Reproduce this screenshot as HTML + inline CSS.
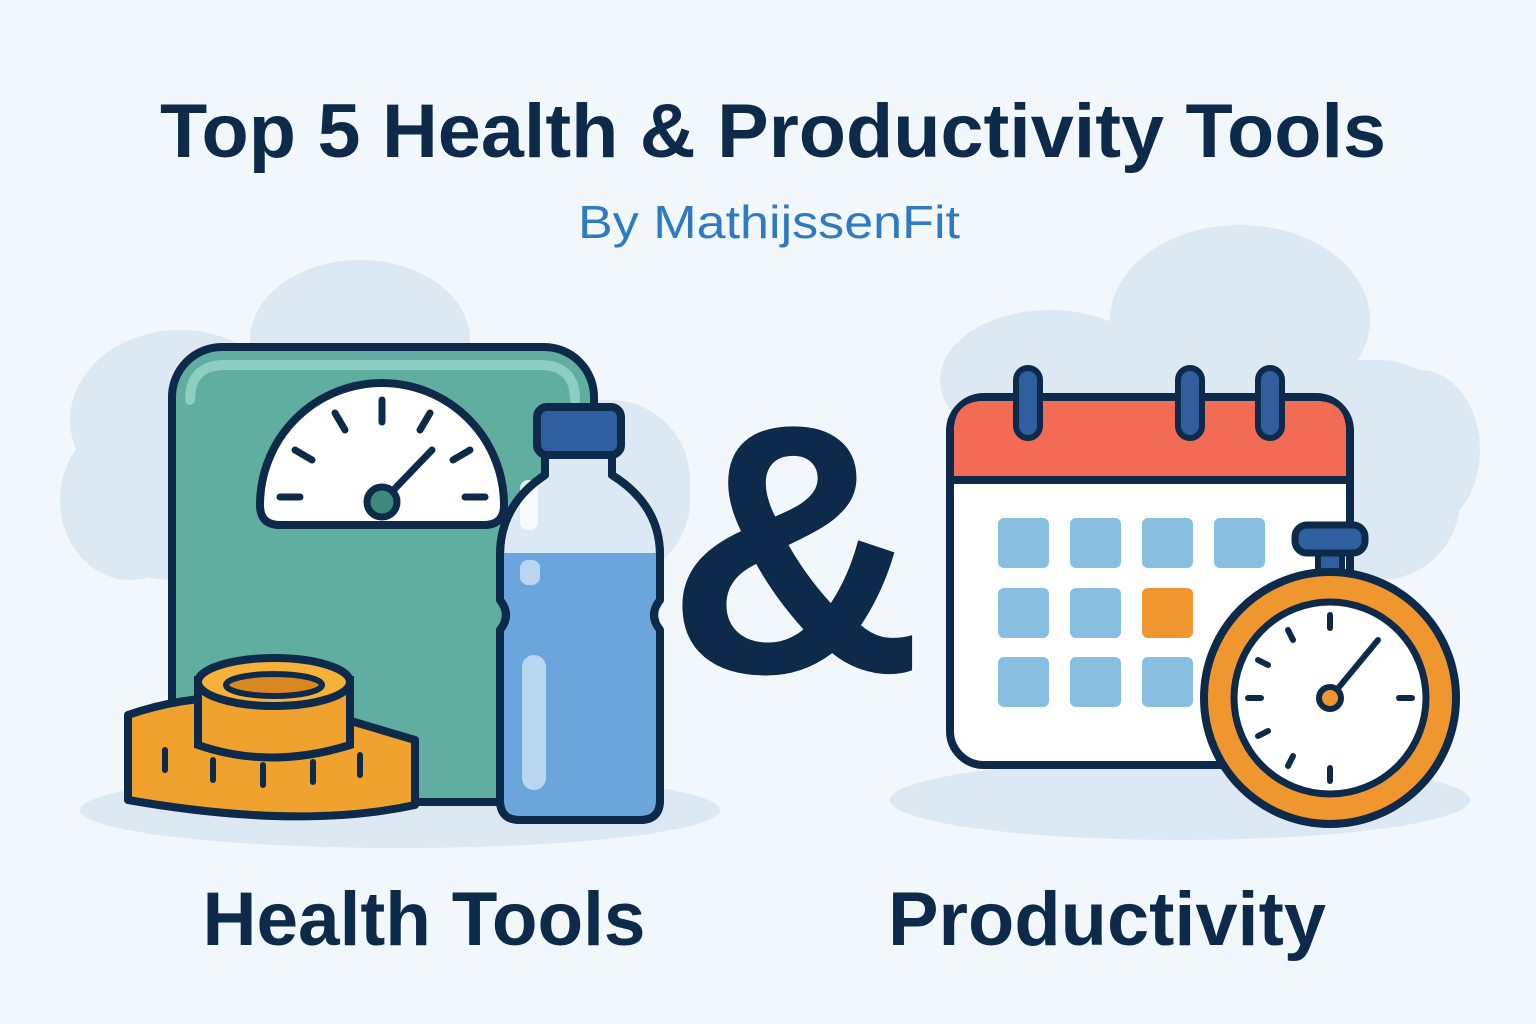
<!DOCTYPE html>
<html><head><meta charset="utf-8"><style>
html,body{margin:0;padding:0;background:#f1f7fb;}
svg{display:block}
text{font-family:"Liberation Sans",sans-serif;font-weight:bold}
</style></head><body>
<svg width="1536" height="1024" viewBox="0 0 1536 1024" xmlns="http://www.w3.org/2000/svg">
<rect width="1536" height="1024" fill="#f1f7fb"/>
<g fill="#dde9f2">
<ellipse cx="360" cy="340" rx="110" ry="80"/>
<ellipse cx="180" cy="420" rx="110" ry="90"/>
<ellipse cx="130" cy="500" rx="70" ry="80"/>
<rect x="90" y="400" width="600" height="180" rx="80"/>
<ellipse cx="1240" cy="320" rx="130" ry="95"/>
<ellipse cx="1050" cy="380" rx="110" ry="70"/>
<ellipse cx="1420" cy="450" rx="60" ry="80"/>
<rect x="960" y="360" width="500" height="220" rx="80"/>
<ellipse cx="400" cy="810" rx="320" ry="38"/>
<ellipse cx="1180" cy="800" rx="290" ry="40"/>
</g>
<text x="773" y="157" font-size="76" fill="#0d2a4a" text-anchor="middle" textLength="1226" lengthAdjust="spacingAndGlyphs">Top 5 Health &amp; Productivity Tools</text>
<text x="769" y="238" font-size="46" fill="#2f7bbf" text-anchor="middle" style="font-weight:normal" textLength="382" lengthAdjust="spacingAndGlyphs">By MathijssenFit</text>
<rect x="172" y="347" width="422" height="455" rx="50" fill="#5fae9f" stroke="#0d2a4a" stroke-width="8"/>
<path d="M190 400 Q190 365 225 365 L540 365 Q575 365 575 400" fill="none" stroke="#8ccfc0" stroke-width="10" stroke-linecap="round"/>
<path d="M260 505 A122 122 0 0 1 504 505 Q504 525 484 525 L280 525 Q260 525 260 505Z" fill="#fff" stroke="#0d2a4a" stroke-width="8"/>
<g stroke="#0d2a4a" stroke-width="7" stroke-linecap="round">
<line x1="280" y1="497" x2="300" y2="497"/><line x1="465" y1="497" x2="485" y2="497"/>
<line x1="295" y1="450" x2="312" y2="460"/><line x1="470" y1="450" x2="453" y2="460"/>
<line x1="335" y1="413" x2="345" y2="430"/><line x1="430" y1="413" x2="420" y2="430"/>
<line x1="382" y1="400" x2="382" y2="422"/>
<line x1="382" y1="502" x2="432" y2="450"/>
</g>
<circle cx="382" cy="502" r="15" fill="#3d8a7b" stroke="#0d2a4a" stroke-width="7"/>
<path d="M128 715 Q200 690 280 700 L415 740 L415 805 Q300 830 128 800Z" fill="#f0a22e" stroke="#0d2a4a" stroke-width="8" stroke-linejoin="round"/>
<path d="M198 680 L198 745 Q270 770 350 745 L350 680Z" fill="#f0a22e" stroke="#0d2a4a" stroke-width="8"/>
<ellipse cx="274" cy="682" rx="76" ry="24" fill="#f5b13a" stroke="#0d2a4a" stroke-width="8"/>
<ellipse cx="274" cy="685" rx="48" ry="11" fill="#d98820" stroke="#0d2a4a" stroke-width="6"/>
<g stroke="#0d2a4a" stroke-width="6" stroke-linecap="round">
<line x1="165" y1="750" x2="165" y2="770"/><line x1="213" y1="760" x2="213" y2="780"/>
<line x1="263" y1="765" x2="263" y2="785"/><line x1="313" y1="762" x2="313" y2="782"/><line x1="360" y1="755" x2="360" y2="775"/>
</g>
<path d="M545 452 L612 452 L612 475 Q660 505 660 555 L660 600 Q648 615 660 630 L660 800 Q660 820 640 820 L520 820 Q500 820 500 800 L500 630 Q512 615 500 600 L500 555 Q500 505 545 475Z" fill="#dbe9f4" stroke="#0d2a4a" stroke-width="8" stroke-linejoin="round"/>
<path d="M504 553 L656 553 L656 600 Q644 615 656 630 L656 800 Q656 816 640 816 L520 816 Q504 816 504 800 L504 630 Q516 615 504 600Z" fill="#6aa6dc"/>
<rect x="520" y="560" width="20" height="25" rx="8" fill="#b9d6f0"/>
<rect x="522" y="655" width="24" height="135" rx="12" fill="#b9d6f0"/>
<rect x="520" y="480" width="18" height="50" rx="8" fill="#fff" opacity=".8"/>
<path d="M545 452 L612 452 L612 475 Q660 505 660 555 L660 600 Q648 615 660 630 L660 800 Q660 820 640 820 L520 820 Q500 820 500 800 L500 630 Q512 615 500 600 L500 555 Q500 505 545 475Z" fill="none" stroke="#0d2a4a" stroke-width="8" stroke-linejoin="round"/>
<rect x="537" y="407" width="84" height="48" rx="10" fill="#2f5f9e" stroke="#0d2a4a" stroke-width="8"/>
<text x="795" y="672" font-size="355" fill="#0d2a4a" text-anchor="middle">&amp;</text>
<rect x="950" y="397" width="400" height="368" rx="34" fill="#fff" stroke="#0d2a4a" stroke-width="8"/>
<path d="M954 480 L954 431 Q954 401 984 401 L1316 401 Q1346 401 1346 431 L1346 480Z" fill="#f26b55"/>
<line x1="954" y1="480" x2="1346" y2="480" stroke="#0d2a4a" stroke-width="8"/>
<g fill="#2f5f9e" stroke="#0d2a4a" stroke-width="6">
<rect x="1016" y="368" width="24" height="70" rx="12"/><rect x="1178" y="368" width="24" height="70" rx="12"/><rect x="1258" y="368" width="24" height="70" rx="12"/>
</g>
<g fill="#88bedf">
<rect x="998" y="518" width="51" height="50" rx="6"/><rect x="1070" y="518" width="51" height="50" rx="6"/><rect x="1142" y="518" width="51" height="50" rx="6"/><rect x="1214" y="518" width="51" height="50" rx="6"/>
<rect x="998" y="588" width="51" height="50" rx="6"/><rect x="1070" y="588" width="51" height="50" rx="6"/>
<rect x="998" y="657" width="51" height="50" rx="6"/><rect x="1070" y="657" width="51" height="50" rx="6"/><rect x="1142" y="657" width="51" height="50" rx="6"/>
</g>
<rect x="1142" y="588" width="51" height="50" rx="6" fill="#f0962e"/>
<rect x="1318" y="545" width="24" height="30" fill="#2f5f9e" stroke="#0d2a4a" stroke-width="6"/>
<rect x="1295" y="525" width="70" height="28" rx="12" fill="#2f5f9e" stroke="#0d2a4a" stroke-width="7"/>
<circle cx="1330" cy="698" r="126" fill="#f0962e" stroke="#0d2a4a" stroke-width="8"/>
<circle cx="1330" cy="698" r="96" fill="#fff" stroke="#0d2a4a" stroke-width="7"/>
<g stroke="#0d2a4a" stroke-width="6" stroke-linecap="round">
<line x1="1330" y1="615" x2="1330" y2="628"/><line x1="1330" y1="768" x2="1330" y2="781"/>
<line x1="1248" y1="698" x2="1261" y2="698"/><line x1="1399" y1="698" x2="1412" y2="698"/>
<line x1="1288" y1="630" x2="1293" y2="640"/><line x1="1258" y1="660" x2="1268" y2="665"/>
<line x1="1258" y1="736" x2="1268" y2="731"/><line x1="1288" y1="766" x2="1293" y2="756"/>
<line x1="1330" y1="698" x2="1378" y2="640"/>
</g>
<circle cx="1330" cy="698" r="11" fill="#f0962e" stroke="#0d2a4a" stroke-width="6"/>
<text x="424" y="945" font-size="76" fill="#0d2a4a" text-anchor="middle" textLength="443" lengthAdjust="spacingAndGlyphs">Health Tools</text>
<text x="1107" y="945" font-size="76" fill="#0d2a4a" text-anchor="middle" textLength="438" lengthAdjust="spacingAndGlyphs">Productivity</text>
</svg>
</body></html>
